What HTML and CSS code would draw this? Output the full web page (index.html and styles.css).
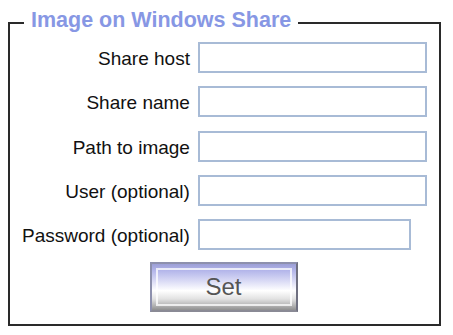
FILE: index.html
```html
<!DOCTYPE html>
<html>
<head>
<meta charset="utf-8">
<link rel="stylesheet" href="styles.css">
</head>
<body>
<form class="share-form">
  <fieldset class="share-box">
    <legend class="share-title">Image on Windows Share</legend>
    <div class="fields">
      <label class="field-label" for="host">Share host</label>
      <input class="field-input" id="host" type="text">
      <label class="field-label" for="name">Share name</label>
      <input class="field-input" id="name" type="text">
      <label class="field-label" for="path">Path to image</label>
      <input class="field-input" id="path" type="text">
      <label class="field-label" for="user">User (optional)</label>
      <input class="field-input" id="user" type="text">
      <label class="field-label" for="pass">Password (optional)</label>
      <input class="field-input field-input-short" id="pass" type="password">
    </div>
    <div class="actions">
      <button class="set-btn" type="button">Set</button>
    </div>
  </fieldset>
</form>
</body>
</html>
```
FILE: styles.css
```css
html, body {
  margin: 0;
  padding: 0;
  background: #ffffff;
}
body {
  font-family: "Liberation Sans", Arial, sans-serif;
  color: #000;
}
.share-form {
  margin: 0;
  padding: 8px 0 0 8px;
  width: 433px;
}
.share-box {
  margin: 0;
  border: 2px solid #2a2a2a;
  padding: 4px 12px 12px 12px;
  min-width: 0;
}
.share-title {
  font-size: 21.5px;
  font-weight: bold;
  color: #8797e4;
  line-height: 24px;
  padding: 0 7px 6px;
  margin-left: 2px;
}
.fields {
  display: grid;
  grid-template-columns: auto auto;
  justify-content: start;
  column-gap: 8px;
  row-gap: 13.25px;
  align-items: center;
}
.field-label {
  font-size: 19px;
  text-align: right;
  padding-top: 3px;
  white-space: nowrap;
  color: #111;
}
.field-input {
  box-sizing: border-box;
  width: 229px;
  height: 31px;
  margin: 0;
  border: 2px solid #a8bbd6;
  background: #fff;
  padding: 0 4px;
  font-size: 16px;
  outline: none;
}
.field-input-short {
  width: 213px;
}
.actions {
  display: flex;
  justify-content: center;
  padding-top: 12px;
  padding-right: 2px;
}
.set-btn {
  box-sizing: border-box;
  width: 148px;
  height: 50px;
  margin: 0;
  padding: 0;
  border: 2px solid #8d90ad;
  border-right-color: #6f7080;
  border-bottom-color: #8a8a95;
  background: linear-gradient(180deg, #9c9fd6 0%, #b3b5ea 14%, #d6d7f4 35%, #ffffff 58%, #e2e2e2 76%, #b4b4b4 90%, #8f8f8f 100%);
  outline: 2px solid rgba(255, 255, 255, 0.75);
  outline-offset: -8px;
  font-family: "Liberation Sans", Arial, sans-serif;
  font-size: 24px;
  color: #555;
  cursor: pointer;
}
```
